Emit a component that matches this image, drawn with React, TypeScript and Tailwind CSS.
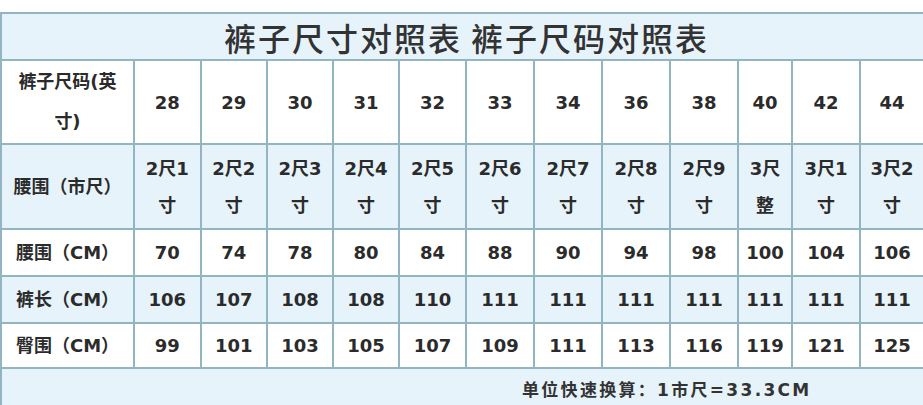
import React from 'react';

const sizes = ['28', '29', '30', '31', '32', '33', '34', '36', '38', '40', '42', '44'];
const waistChi = ['2尺1', '2尺2', '2尺3', '2尺4', '2尺5', '2尺6', '2尺7', '2尺8', '2尺9', '3尺', '3尺1', '3尺2'];
const waistChiTail = ['寸', '寸', '寸', '寸', '寸', '寸', '寸', '寸', '寸', '整', '寸', '寸'];
const waistCm = ['70', '74', '78', '80', '84', '88', '90', '94', '98', '100', '104', '106'];
const lengthCm = ['106', '107', '108', '108', '110', '111', '111', '111', '111', '111', '111', '111'];
const hipCm = ['99', '101', '103', '105', '107', '109', '111', '113', '116', '119', '121', '125'];

const font = { fontFamily: '"DejaVu Sans", "Noto Sans CJK SC", sans-serif' };

const cell = 'border-l-2 border-b-2 border-[#93b5c2] flex items-center justify-center text-center';

const App = () => {
  const rows = [
    { label: <>裤子尺码(英<br />寸)</>, values: sizes, bg: 'bg-white', h: 'h-[84px]', tall: false },
    { label: <>腰围（市尺）</>, values: waistChi, bg: 'bg-[#e7f3fb]', h: 'h-[85px]', tall: true },
    { label: <>腰围（CM）</>, values: waistCm, bg: 'bg-white', h: 'h-[47px]', tall: false },
    { label: <>裤长（CM）</>, values: lengthCm, bg: 'bg-[#e7f3fb]', h: 'h-[47px]', tall: false },
    { label: <>臀围（CM）</>, values: hipCm, bg: 'bg-white', h: 'h-[45px]', tall: false },
  ];

  return (
    <div className="w-[923px] h-[405px] bg-white pt-[12px] overflow-hidden text-[#2b2b2b]" style={font}>
      <div className="border-t-2 border-[#93b5c2]">
        {/* Title */}
        <div className="h-[47px] bg-[#e7f3fb] border-l-2 border-b-2 border-[#93b5c2] flex items-center justify-center">
          <span
            className="text-[32px] font-medium tracking-[2px] text-[#333] pl-[8px]"
            style={{ fontFamily: '"Noto Sans CJK SC", sans-serif' }}
          >
            裤子尺寸对照表 裤子尺码对照表
          </span>
        </div>

        {/* Table body */}
        <div className="grid grid-cols-[133px_66.5px_66.5px_66px_66px_67px_68px_68px_68px_68px_54px_68px_64px]">
          {rows.map((row, r) => (
            <React.Fragment key={r}>
              <div className={`${cell} ${row.bg} ${row.h} font-bold text-[18px] leading-[40px] px-[2px]`}>
                <span className="whitespace-nowrap">{row.label}</span>
              </div>
              {row.values.map((v, i) => (
                <div key={i} className={`${cell} ${row.bg} ${row.h} font-bold text-[18px]`}>
                  {row.tall ? (
                    <span className="leading-[37px] whitespace-nowrap">
                      {v}
                      <br />
                      {waistChiTail[i]}
                    </span>
                  ) : (
                    <span>{v}</span>
                  )}
                </div>
              ))}
            </React.Fragment>
          ))}
        </div>

        {/* Footer */}
        <div className="h-[60px] bg-[#e7f3fb] border-l-2 border-[#93b5c2] pl-[520px] pt-[9px]">
          <span className="font-bold text-[17px] tracking-[2.3px] text-[#333] whitespace-nowrap">
            单位快速换算：1市尺=33.3CM
          </span>
        </div>
      </div>
    </div>
  );
};

export default App;
